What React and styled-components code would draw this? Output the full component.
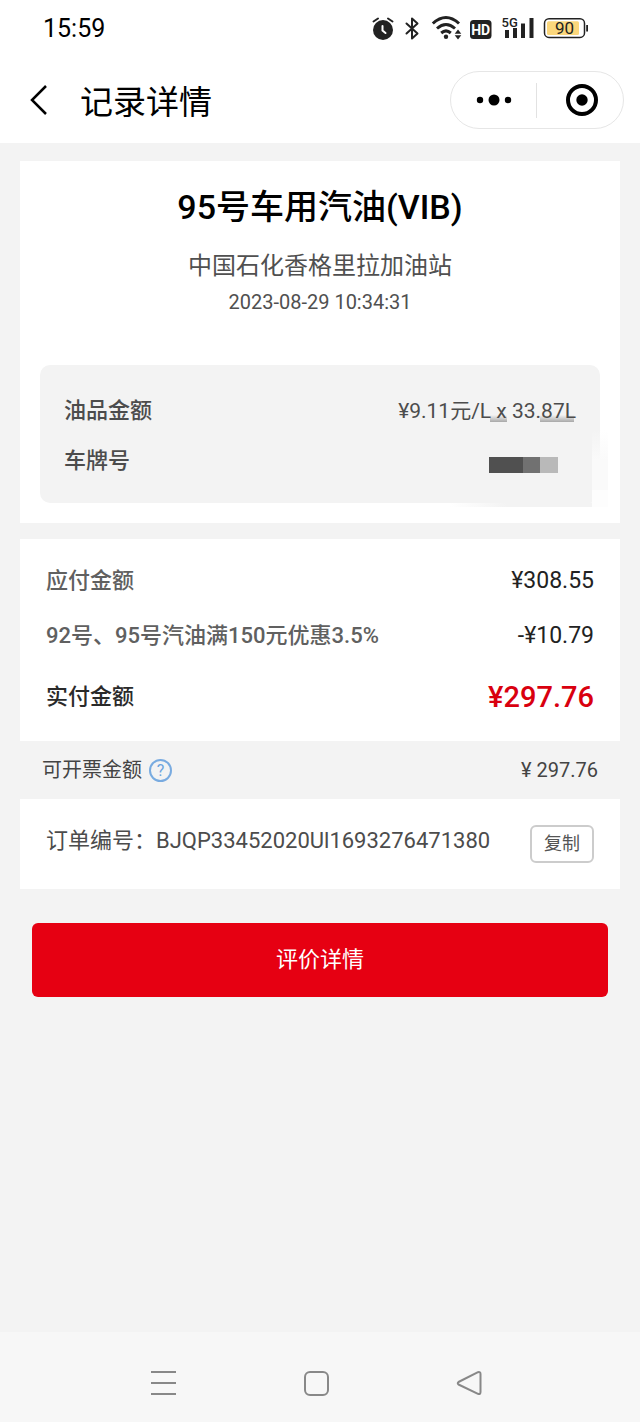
import React from "react";
import styled, { createGlobalStyle } from "styled-components";

const GlobalStyle = createGlobalStyle`
  * { box-sizing: border-box; }
  body {
    margin: 0;
    background: #f3f3f3;
    font-family: Roboto, "Noto Sans CJK SC", sans-serif;
  }
  button { font-family: inherit; cursor: pointer; }
`;

const Screen = styled.div`
  display: flex;
  flex-direction: column;
  min-height: 100vh;
`;

const StatusBar = styled.header`
  display: flex;
  align-items: center;
  justify-content: space-between;
  height: 57px;
  padding: 0 51px 0 43px;
  background: #fff;
`;

const Clock = styled.time`
  font-size: 25px;
  line-height: 32px;
  color: #000;
`;

const StatusIcons = styled.div`
  display: flex;
  align-items: center;
`;

const TitleBar = styled.nav`
  display: flex;
  align-items: center;
  height: 86px;
  padding: 0 16px 0 24px;
  background: #fff;
`;

const IconButton = styled.button`
  display: flex;
  align-items: center;
  justify-content: center;
  width: ${(p) => p.$width}px;
  height: 56px;
  padding: 0 0 0 ${(p) => p.$inset || 0}px;
  border: 0;
  background: none;
`;

const PageTitle = styled.h1`
  flex: 1;
  margin: 0 0 0 26px;
  padding-top: 5px;
  font-size: 33px;
  line-height: 48px;
  font-weight: 400;
  color: #000;
`;

const Capsule = styled.div`
  display: flex;
  align-items: center;
  height: 58px;
  border: 1px solid #e6e6e6;
  border-radius: 29px;
`;

const CapsuleDivider = styled.span`
  width: 1px;
  height: 35px;
  background: #e2e2e2;
`;

const Content = styled.main`
  flex: 1;
  padding: 18px 20px 40px;
`;

const Card = styled.section`
  padding: ${(p) => p.$padding};
  margin-bottom: ${(p) => p.$gap || 0}px;
  background: #fff;
`;

const Product = styled.h2`
  margin: 0 0 17px;
  font-size: 34px;
  line-height: 48px;
  font-weight: 500;
  text-align: center;
  color: #000;
`;

const Station = styled.p`
  margin: 0 0 4px;
  font-size: 24px;
  line-height: 36px;
  text-align: center;
  color: #505050;
`;

const OrderTime = styled.p`
  margin: 0 0 49px;
  font-size: 20px;
  line-height: 28px;
  text-align: center;
  color: #505050;
`;

const FuelPanel = styled.div`
  position: relative;
  padding: 21px 24px 17px;
  border-radius: 10px;
  background: #f3f3f3;
`;

const Mosaic = styled.svg`
  position: absolute;
  top: 50px;
  right: -12px;
`;

const Row = styled.div`
  position: relative;
  display: flex;
  align-items: center;
  justify-content: space-between;
  height: ${(p) => p.$height}px;
`;

const Label = styled.span`
  font-size: 22px;
  line-height: 32px;
  font-weight: ${(p) => p.$weight || 500};
  color: ${(p) => p.$color || "#4c4c4c"};
`;

const Amount = styled(Label)`
  font-size: ${(p) => p.$size || 23}px;
  font-weight: ${(p) => p.$weight || 400};
  color: ${(p) => p.$color || "#222"};
`;

const InvoiceStrip = styled.div`
  display: flex;
  align-items: center;
  justify-content: space-between;
  height: 58px;
  padding: 0 22px;
  font-size: 20px;
  line-height: 28px;
  color: #444;
`;

const InvoiceLabel = styled.div`
  display: flex;
  align-items: center;
  gap: 7px;
`;

const HelpButton = styled.button`
  width: 23px;
  height: 23px;
  padding: 0;
  border: 2px solid #79abe0;
  border-radius: 50%;
  background: none;
  font-size: 16px;
  line-height: 19px;
  color: #6ba3df;
`;

const OrderRow = styled.div`
  display: flex;
  align-items: flex-start;
  justify-content: space-between;
`;

const CopyButton = styled.button`
  width: 64px;
  height: 38px;
  padding: 0;
  border: 2px solid #ccc;
  border-radius: 6px;
  background: #fff;
  font-size: 18px;
  line-height: 26px;
  color: #555;
`;

const ReviewButton = styled.button`
  display: block;
  width: calc(100% - 24px);
  height: 74px;
  margin: 0 12px;
  padding: 0;
  border: 0;
  border-radius: 6px;
  background: #e60012;
  font-size: 22px;
  line-height: 32px;
  color: #fff;
`;

const SystemNav = styled.footer`
  display: flex;
  align-items: center;
  justify-content: center;
  gap: 97px;
  height: 90px;
  padding: 12px 8px 0 0;
  background: #f7f7f7;
`;

function StatusGlyphs() {
  return (
    <svg width="218" height="32" viewBox="371 13 218 32" fill="none" aria-hidden="true">
      <g stroke="#222" strokeLinecap="round">
        <circle cx="383" cy="30" r="10" fill="#222" stroke="none" />
        <path d="M373.500 21.500 L378 18.500 M392.500 21.500 L388 18.500" strokeWidth="2" />
        <path d="M382.500 26 V30.500 L385.500 33" stroke="#fff" strokeWidth="2" />
        <path d="M406.500 23.500 L417.500 33.500 L412 38.500 V18.500 L417.500 23.500 L406.500 33.500" strokeWidth="2" strokeLinejoin="round" />
        <g strokeWidth="3" strokeLinecap="butt">
          <path d="M432.800 23.500 Q446 11.500 459 23.500" />
          <path d="M437 28.500 Q446 20.500 455 28.500" />
          <path d="M441.200 33 Q446 28.800 450.800 33" />
        </g>
      </g>
      <circle cx="446" cy="36.700" r="2.200" fill="#222" />
      <path d="M458 29.500 l3.300 4.200 h-6.600z M458 39.500 l3.300 -4.200 h-6.600z" fill="#222" />
      <rect x="470" y="20" width="21.500" height="19" rx="3.500" fill="#222" />
      <text x="480.700" y="34.500" textAnchor="middle" fontFamily="Roboto, sans-serif" fontWeight="700" fontSize="14" fill="#fff">HD</text>
      <text x="501.500" y="27" fontFamily="Roboto, sans-serif" fontWeight="500" fontSize="13" fill="#222">5G</text>
      <path d="M505 30h4v8h-4z M513 28h4v10h-4z M521 23.500h4v14.500h-4z M529.500 18h4v20h-4z" fill="#222" />
      <rect x="544.500" y="18.800" width="40" height="18.600" rx="4.500" stroke="#222" strokeWidth="1.500" />
      <rect x="547" y="21.200" width="32" height="13.800" rx="1.500" fill="#fbd77c" />
      <path d="M586.200 25h1.800v6.500h-1.800z" fill="#222" />
      <text x="564.500" y="34" textAnchor="middle" fontFamily="Roboto, sans-serif" fontSize="17" fill="#222">90</text>
    </svg>
  );
}

function PlateMosaic() {
  return (
    <Mosaic width="162" height="94" viewBox="450 415 162 94" aria-hidden="true">
      <defs>
        <linearGradient id="smear" x1="0" y1="0" x2="0" y2="1">
          <stop offset="0" stopColor="#f3f3f3" />
          <stop offset="1" stopColor="#a8a8a8" />
        </linearGradient>
        <linearGradient id="fade" x1="0" y1="0" x2="1" y2="0">
          <stop offset="0" stopColor="#f3f3f3" stopOpacity="0" />
          <stop offset="0.400" stopColor="#f3f3f3" />
        </linearGradient>
        <linearGradient id="edge" x1="0" y1="0" x2="0" y2="1">
          <stop offset="0" stopColor="#fafafa" stopOpacity="0" />
          <stop offset="0.500" stopColor="#fafafa" />
        </linearGradient>
      </defs>
      <rect x="592" y="430" width="16" height="60" fill="url(#edge)" />
      <rect x="592" y="490" width="16" height="17" fill="#fdfdfd" />
      <rect x="450" y="503" width="142" height="4" fill="url(#fade)" />
      <rect x="490" y="415" width="17" height="7" fill="url(#smear)" />
      <rect x="540" y="415" width="34" height="7" fill="url(#smear)" />
      <rect x="489" y="457" width="34" height="16" fill="#505050" />
      <rect x="523" y="457" width="17" height="16" fill="#717171" />
      <rect x="540" y="457" width="18" height="16" fill="#b9b9b9" />
    </Mosaic>
  );
}

export default function App() {
  return (
    <Screen>
      <GlobalStyle />
      <StatusBar>
        <Clock>15:59</Clock>
        <StatusIcons><StatusGlyphs /></StatusIcons>
      </StatusBar>
      <TitleBar>
        <IconButton $width={30} aria-label="返回">
          <svg width="18" height="32" viewBox="0 0 18 32" fill="none">
            <path d="M16 2 L2 16 L16 30" stroke="#000" strokeWidth="2.500" />
          </svg>
        </IconButton>
        <PageTitle>记录详情</PageTitle>
        <Capsule>
          <IconButton $width={85} aria-label="更多">
            <svg width="36" height="12" viewBox="0 0 36 12">
              <circle cx="4" cy="6" r="3.200" />
              <circle cx="18" cy="6" r="5.500" />
              <circle cx="32" cy="6" r="3.200" />
            </svg>
          </IconButton>
          <CapsuleDivider />
          <IconButton $width={86} $inset={3} aria-label="关闭">
            <svg width="34" height="34" viewBox="0 0 34 34">
              <circle cx="17" cy="17" r="14" fill="none" stroke="#000" strokeWidth="4" />
              <circle cx="17" cy="17" r="5.700" />
            </svg>
          </IconButton>
        </Capsule>
      </TitleBar>
      <Content>
        <Card $padding="22px 20px 20px" $gap={16}>
          <Product>95号车用汽油(VIB)</Product>
          <Station>中国石化香格里拉加油站</Station>
          <OrderTime>2023-08-29 10:34:31</OrderTime>
          <FuelPanel>
            <PlateMosaic />
            <Row $height={50}>
              <Label>油品金额</Label>
              <Amount $size={21} $color="#4c4c4c">¥9.11元/L x 33.87L</Amount>
            </Row>
            <Row $height={50}>
              <Label>车牌号</Label>
            </Row>
          </FuelPanel>
        </Card>
        <Card $padding="15px 26px 11px">
          <Row $height={54}>
            <Label $color="#606060">应付金额</Label>
            <Amount>¥308.55</Amount>
          </Row>
          <Row $height={56}>
            <Label $color="#606060">92号、95号汽油满150元优惠3.5%</Label>
            <Amount>-¥10.79</Amount>
          </Row>
          <Row $height={66}>
            <Label $color="#2a2a2a">实付金额</Label>
            <Amount $size={29} $weight={500} $color="#d9000f">¥297.76</Amount>
          </Row>
        </Card>
        <InvoiceStrip>
          <InvoiceLabel>
            可开票金额
            <HelpButton aria-label="开票说明">?</HelpButton>
          </InvoiceLabel>
          <span>¥ 297.76</span>
        </InvoiceStrip>
        <Card $padding="26px" $gap={34}>
          <OrderRow>
            <Label $weight={400}>订单编号：BJQP33452020Ul1693276471380</Label>
            <CopyButton>复制</CopyButton>
          </OrderRow>
        </Card>
        <ReviewButton>评价详情</ReviewButton>
      </Content>
      <SystemNav>
        <IconButton $width={56} aria-label="最近任务">
          <svg width="26" height="26" viewBox="0 0 26 26" stroke="#888" strokeWidth="2">
            <path d="M1 2H26 M1 13H26 M1 24H26" />
          </svg>
        </IconButton>
        <IconButton $width={56} aria-label="主屏幕">
          <svg width="26" height="26" viewBox="0 0 26 26" fill="none" stroke="#888" strokeWidth="2">
            <rect x="2" y="2" width="23" height="23" rx="5" />
          </svg>
        </IconButton>
        <IconButton $width={56} aria-label="返回上一页">
          <svg width="26" height="26" viewBox="0 0 26 26" fill="none" stroke="#888" strokeWidth="2" strokeLinejoin="round">
            <path d="M2.500 12 L22 2.200 Q24.500 1.500 24.500 4 V22 Q24.500 24.800 22 23.800 L2.500 14.500 Q1 13.200 2.500 12Z" />
          </svg>
        </IconButton>
      </SystemNav>
    </Screen>
  );
}
